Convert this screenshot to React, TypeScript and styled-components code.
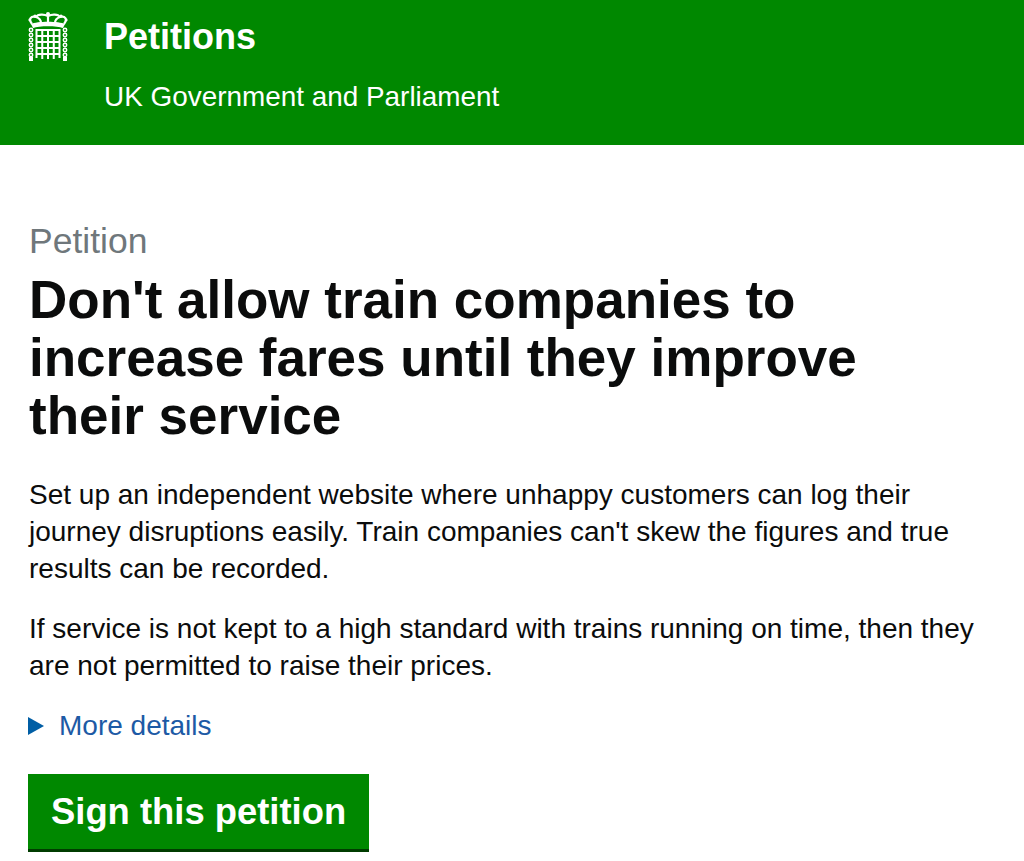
import React from "react";
import styled, { createGlobalStyle } from "styled-components";

const GlobalStyle = createGlobalStyle`
  html, body {
    margin: 0;
    background: #fff;
    font-family: "Liberation Sans", Arial, sans-serif;
    color: #0b0c0c;
  }
`;

const Header = styled.header`
  height: 145px;
  box-sizing: border-box;
  background: #008800;
  color: #fff;
  display: flex;
  padding: 12px 0 0 28px;
  gap: 36px;
`;

const Brand = styled.div`
  display: flex;
  flex-direction: column;
`;

const BrandName = styled.a`
  font-size: 36px;
  line-height: 50px;
  font-weight: 700;
`;

const BrandSub = styled.a`
  font-size: 27.9px;
  line-height: 38px;
  margin-top: 16px;
`;

const Main = styled.main`
  padding: 76px 0 0 29px;
`;

const Eyebrow = styled.div`
  font-size: 35.5px;
  line-height: 40px;
  color: #6f777b;
`;

const Title = styled.h1`
  margin: 10px 0 0;
  font-size: 53px;
  line-height: 58px;
  font-weight: 700;
  width: 900px;
`;

const Para = styled.p`
  margin: 0 0 23px;
  font-size: 28px;
  line-height: 37px;
  width: 960px;
`;

const Body = styled.div`
  margin-top: 31px;
`;

const Details = styled.a`
  display: flex;
  align-items: center;
  gap: 15px;
  font-size: 28px;
  line-height: 37px;
  color: #1d5aa5;
  margin: 1px 0 0 -1px;
`;

const Arrow = styled.svg`
  width: 16px;
  height: 18px;
  fill: #005ea5;
`;

const SignButton = styled.a`
  display: inline-block;
  margin: 30px 0 0 -1px;
  padding: 0 23px;
  height: 78px;
  line-height: 75px;
  box-sizing: border-box;
  background: #008800;
  border-bottom: 3px solid #003c00;
  color: #fff;
  font-size: 36.4px;
  font-weight: 700;
`;

const Portcullis = () => (
  <svg width="40" height="50" viewBox="0 0 40 50" fill="#fff" aria-hidden="true">
    {/* crown */}
    <path d="M3 12 C9 9 31 9 37 12 L35 16 C29 13.5 11 13.5 5 16 Z" />
    <g stroke="#fff" strokeWidth="2.2" fill="none">
      <path d="M4 12 C0 7 3 3.5 8 5 C11 6 13 8 13 11" />
      <path d="M36 12 C40 7 37 3.5 32 5 C29 6 27 8 27 11" />
      <path d="M8 5 C10 2 16 2 20 4 C24 2 30 2 32 5" />
      <path d="M20 4 V11" />
    </g>
    <circle cx="20" cy="2" r="2" />
    <circle cx="7" cy="4" r="1.6" />
    <circle cx="33" cy="4" r="1.6" />
    <circle cx="1.8" cy="8" r="1.4" />
    <circle cx="38.2" cy="8" r="1.4" />
    {/* lattice */}
    <g stroke="#fff" strokeWidth="2" fill="none">
      <path d="M8.5 17 V46 M14.25 17 V47 M20 17 V47 M25.75 17 V47 M31.5 17 V46" />
      <path d="M8 18 H32 M8 24 H32 M8 30 H32 M8 36 H32 M8 42 H32" />
    </g>
    {/* chains */}
    {[18, 23, 28, 33, 38, 43].map((y) => (
      <g key={y} stroke="#fff" strokeWidth="1.5" fill="none">
        <circle cx="3" cy={y} r="1.7" />
        <circle cx="37" cy={y} r="1.7" />
      </g>
    ))}
    <rect x="1" y="45" width="4" height="4" />
    <rect x="35" y="45" width="4" height="4" />
  </svg>
);

export default function App() {
  return (
    <>
      <GlobalStyle />
      <Header>
        <Portcullis />
        <Brand>
          <BrandName>Petitions</BrandName>
          <BrandSub>UK Government and Parliament</BrandSub>
        </Brand>
      </Header>
      <Main>
        <Eyebrow>Petition</Eyebrow>
        <Title>Don't allow train companies to increase fares until they improve their service</Title>
        <Body>
          <Para>
            Set up an independent website where unhappy customers can log their journey disruptions easily. Train
            companies can't skew the figures and true results can be recorded.
          </Para>
          <Para>
            If service is not kept to a high standard with trains running on time, then they are not permitted to
            raise their prices.
          </Para>
        </Body>
        <Details>
          <Arrow viewBox="0 0 16 18" aria-hidden="true">
            <path d="M0 0 L16 9 L0 18 Z" />
          </Arrow>
          More details
        </Details>
        <SignButton>Sign this petition</SignButton>
      </Main>
    </>
  );
}
